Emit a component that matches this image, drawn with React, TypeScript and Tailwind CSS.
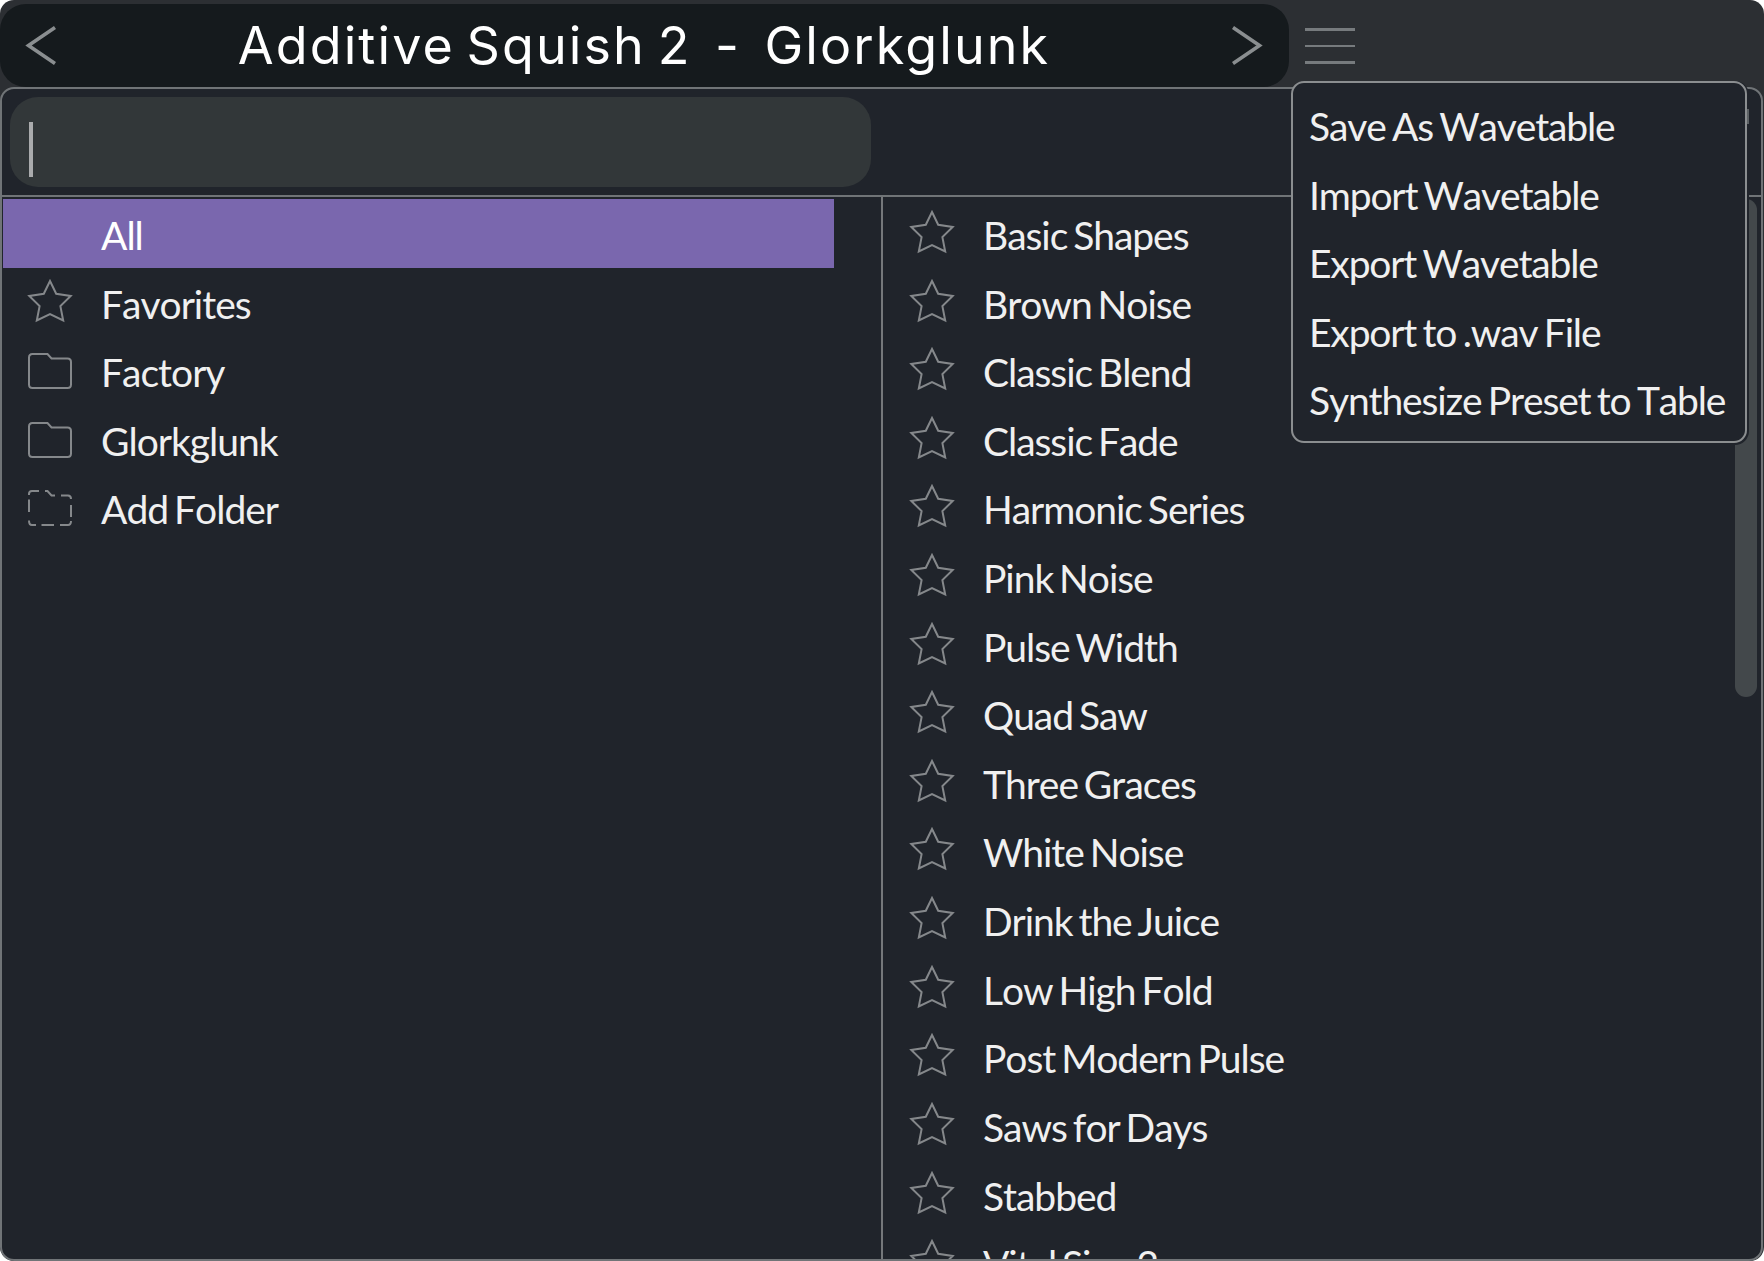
import { useState } from "react";

const folders = [
  { name: "All", icon: null },
  { name: "Favorites", icon: "star" },
  { name: "Factory", icon: "folder" },
  { name: "Glorkglunk", icon: "folder" },
  { name: "Add Folder", icon: "add" },
];

const wavetables = [
  "Basic Shapes",
  "Brown Noise",
  "Classic Blend",
  "Classic Fade",
  "Harmonic Series",
  "Pink Noise",
  "Pulse Width",
  "Quad Saw",
  "Three Graces",
  "White Noise",
  "Drink the Juice",
  "Low High Fold",
  "Post Modern Pulse",
  "Saws for Days",
  "Stabbed",
  "Vital Sine 2",
];

const menuItems = [
  "Save As Wavetable",
  "Import Wavetable",
  "Export Wavetable",
  "Export to .wav File",
  "Synthesize Preset to Table",
];

function StarIcon() {
  return (
    <svg
      className="w-[46px] h-[44px] text-[#85888b]"
      viewBox="0 0 46 44"
      fill="none"
      stroke="currentColor"
      strokeWidth="2"
    >
      <path d="M23 2L29.2 14.8L43.7 16.9L33.4 27.1L36.2 41.5L23 35L9.8 41.5L12.6 27.1L2.3 16.9L16.8 14.8Z" />
    </svg>
  );
}

function FolderIcon({ dashed = false }: { dashed?: boolean }) {
  return (
    <svg
      className="w-[46px] h-[44px] text-[#85888b]"
      viewBox="0 0 46 44"
      fill="none"
      stroke="currentColor"
      strokeWidth="2"
    >
      {dashed ? (
        <path d="M2 11V10Q2 7 5 7H12M18 7H20.5L24.5 11.5H28M34 11.5H41Q44 11.5 44 15M44 21V33M44 37Q44 41 41 41H33M27 41H14.5M9 41H5Q2 41 2 36.5M2 28V15.5" />
      ) : (
        <path d="M5.5 7H20.5L24.5 11.5H40.5Q44 11.5 44 15V37.5Q44 41 40.5 41H5.5Q2 41 2 37.5V10.5Q2 7 5.5 7Z" />
      )}
    </svg>
  );
}

function Chevron({ flip = false }: { flip?: boolean }) {
  return (
    <svg
      className={flip ? "w-8 h-10 -scale-x-100" : "w-8 h-10"}
      viewBox="0 0 32 40"
      fill="none"
      stroke="#8a8e90"
      strokeWidth="3.6"
    >
      <path d="M31 1.5L4.5 19.5L31 37.5" />
    </svg>
  );
}

export default function App() {
  const [selected, setSelected] = useState("All");

  return (
    <div className="h-screen bg-white">
      <div className="relative flex flex-col h-full overflow-hidden rounded-[14px] bg-[#2c2f33] font-['Lato',sans-serif] text-[#f0f0f0]">
        <header className="flex items-center shrink-0 h-[87px] pt-1">
          <div className="flex items-center justify-between w-[1289px] h-[83px] pl-[24px] pr-[25px] rounded-[26px] bg-[#151a1d]">
            <button>
              <Chevron />
            </button>
            <h1 className="font-['Inter',sans-serif] text-[52px] leading-[60px] tracking-[2.1px] [word-spacing:-5px] whitespace-pre text-white">
              {"Additive Squish 2  -  Glorkglunk"}
            </h1>
            <button>
              <Chevron flip />
            </button>
          </div>
          <button className="flex flex-col gap-[14px] ml-[16px] mt-px">
            <span className="w-[50px] h-[2.5px] bg-[#777b7e]" />
            <span className="w-[50px] h-[2.5px] bg-[#777b7e]" />
            <span className="w-[50px] h-[2.5px] bg-[#777b7e]" />
          </button>
        </header>

        <main className="flex flex-col flex-1 min-h-0 mr-px overflow-hidden border-2 border-[#707477] rounded-[14px] bg-[#20242b]">
          <div className="shrink-0 h-[108px] pl-2 pt-2 border-b-2 border-[#707477]">
            <div className="w-[861px] h-[90px] pl-[18.5px] pt-[25px] rounded-[28px] bg-[#323739]">
              <div className="w-1 h-[55px] bg-[#aaabad]" />
            </div>
          </div>

          <div className="flex flex-1 min-h-0">
            <ul className="w-[881px] pt-[2px] pl-px border-r-2 border-[#75787b] text-[39px] tracking-[-1px] [word-spacing:-3px] [font-kerning:none]">
              {folders.map(({ name, icon }) => (
                <li
                  key={name}
                  onClick={() => setSelected(name)}
                  className={`flex items-start w-[831px] h-[68.62px] pl-[24px] ${
                    selected === name ? "bg-[#7a67ae] text-white" : ""
                  }`}
                >
                  <div className="w-[74px] pt-[11px]">
                    {icon === "star" && <StarIcon />}
                    {icon === "folder" && <FolderIcon />}
                    {icon === "add" && <FolderIcon dashed />}
                  </div>
                  <span className="leading-[72px]">{name}</span>
                </li>
              ))}
            </ul>

            <ul className="flex-1 pt-[2px] overflow-hidden text-[39px] tracking-[-1.05px] [word-spacing:-3px] [font-kerning:none]">
              {wavetables.map((name) => (
                <li key={name} className="flex items-start h-[68.62px] pl-[26px]">
                  <div className="w-[74px] pt-[11px]">
                    <StarIcon />
                  </div>
                  <span className="leading-[72px]">{name}</span>
                </li>
              ))}
            </ul>

            <div className="w-[27px] pt-[2px] pl-px">
              <div className="w-[22px] h-[498px] rounded-full bg-[#43484b]" />
            </div>
          </div>
        </main>

        <div className="absolute left-[1291px] top-[81px] w-[458px] h-[364px] pr-[2px] pb-[2px] rounded-[14px] bg-[#20242b]">
          <ul className="h-full pt-[9px] pl-[16px] border-2 border-[#8b8e90] rounded-[13px] text-[39px] tracking-[-1.15px] [word-spacing:-2.5px] [font-kerning:none]">
            {menuItems.map((item) => (
              <li key={item} className="h-[68.62px] leading-[68px] whitespace-nowrap">
                {item}
              </li>
            ))}
          </ul>
          <div className="absolute right-0 top-[28px] w-[2px] h-[15px] bg-[#5c6164]" />
        </div>
      </div>
    </div>
  );
}
